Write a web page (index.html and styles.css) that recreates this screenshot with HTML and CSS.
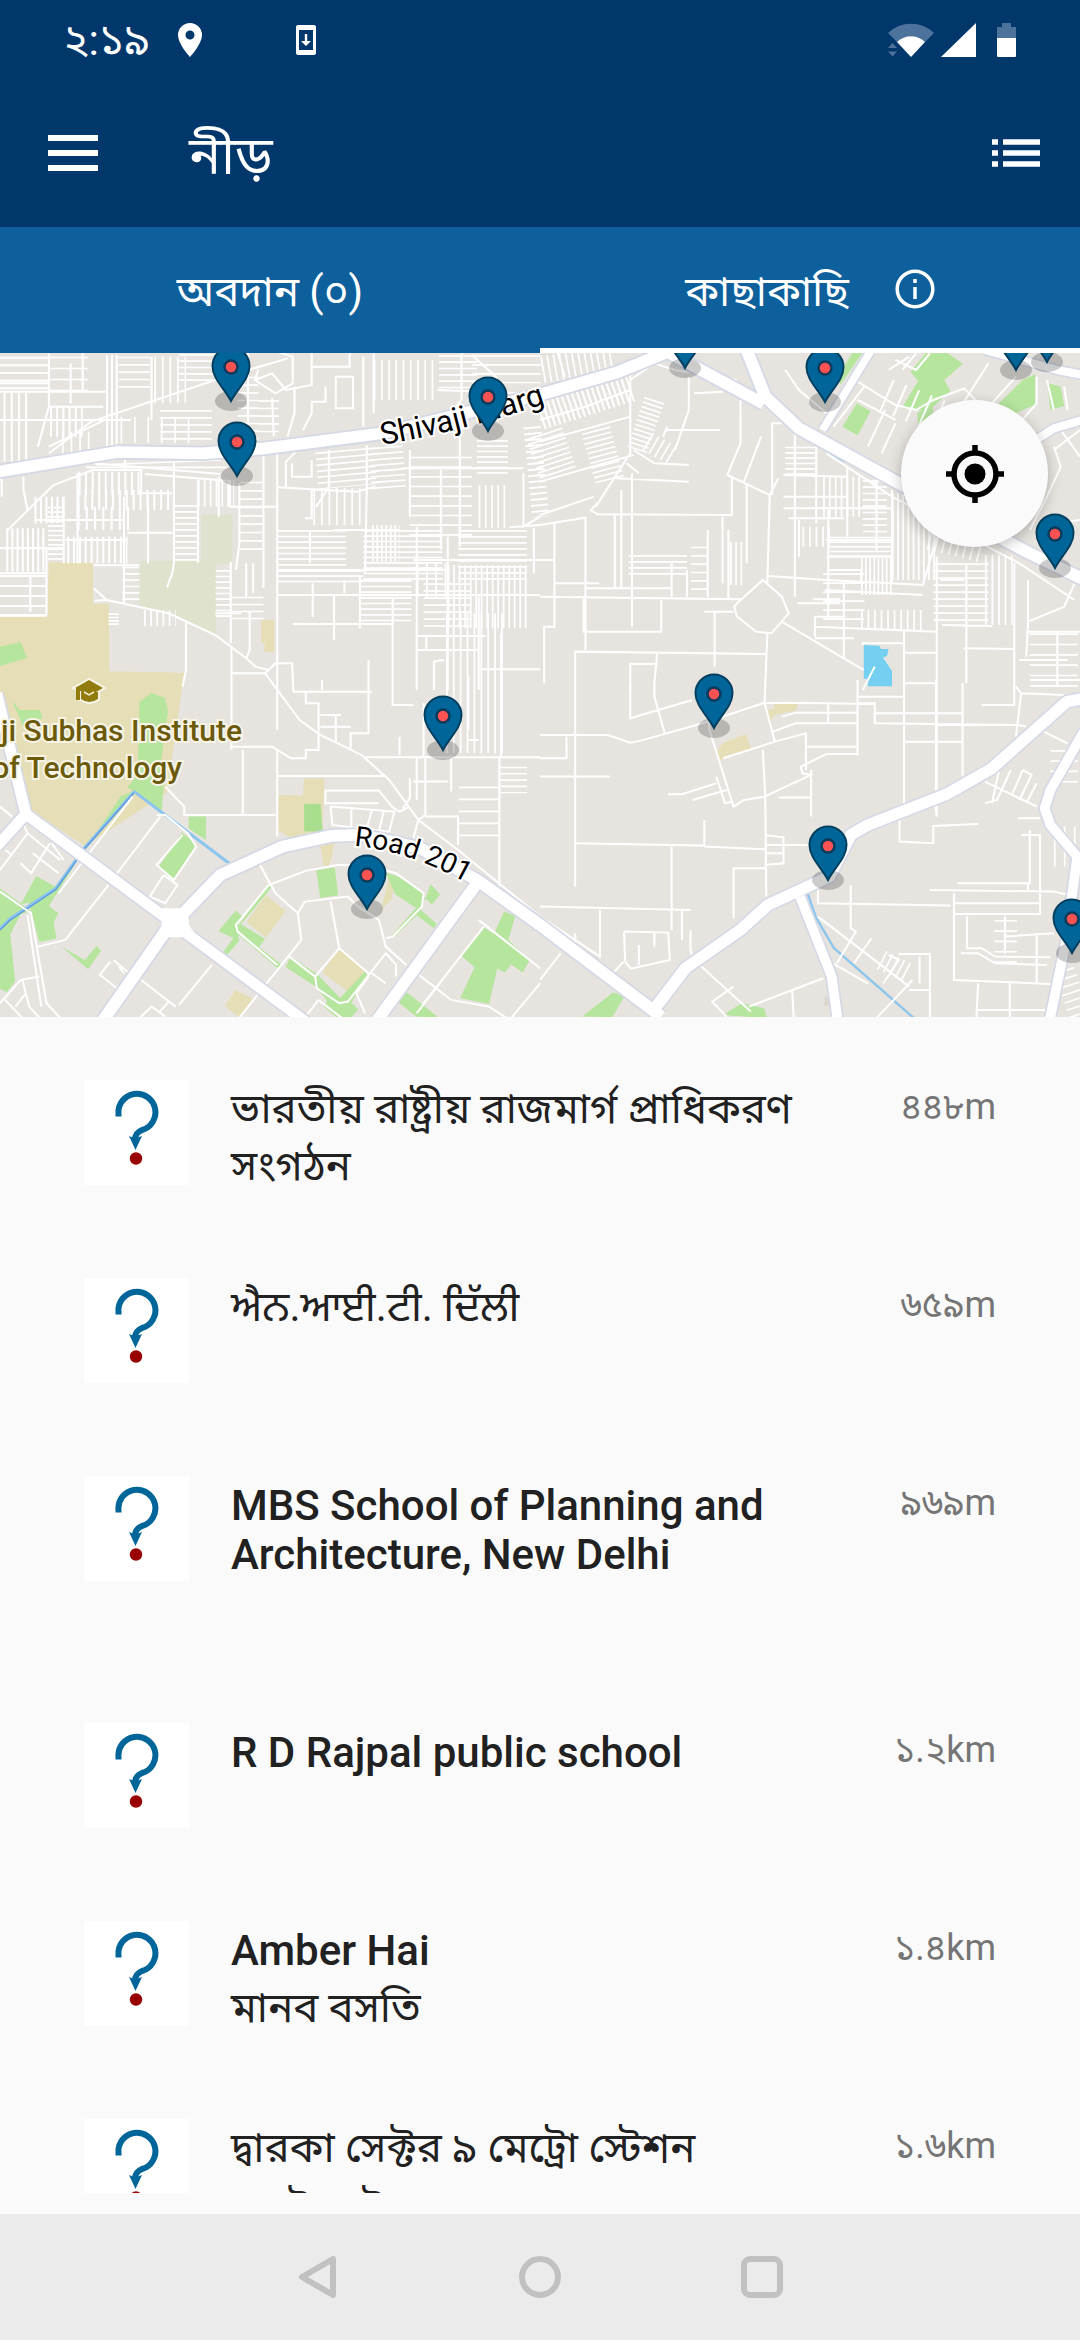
FILE: index.html
```html
<!DOCTYPE html>
<html lang="bn">
<head>
<meta charset="utf-8">
<meta name="viewport" content="width=device-width, initial-scale=1">
<title>নীড়</title>
<link rel="stylesheet" href="styles.css">
</head>
<body>
<svg class="defs" aria-hidden="true">
  <defs>
    <symbol id="question" viewBox="0 0 105 105">
      <path d="M34.500 36.500V34A18.500 18.500 0 1 1 58 50C53 52 51 55 51 60" fill="none" stroke="#069" stroke-width="6"/>
      <path d="M45 56q6 3 13 0l-6.500 14z" fill="#069"/>
      <circle cx="52" cy="78.500" r="6.200" fill="#900"/>
    </symbol>
    <g id="pin">
      <ellipse cx="0" cy="-1" rx="16" ry="10" fill="#000" fill-opacity=".2"/>
      <path d="M0-1C-6-13-18.500-23-18.500-36A18.500 18.500 0 0 1 18.500-36C18.500-23 6-13 0-1z" fill="#069" stroke="#003f5f" stroke-width="2"/>
      <circle cy="-35" r="6.500" fill="#ff5252" stroke="#0a3a5c" stroke-width="2.500"/>
    </g>
  </defs>
</svg>

<div class="screen">
  <header class="top">
    <div class="status">
      <span class="clock">২:১৯</span>
      <svg class="place" viewBox="0 0 24 34"><path d="M12 0A12 12 0 0 0 0 12c0 9 12 22 12 22s12-13 12-22A12 12 0 0 0 12 0zm0 16.500a4.500 4.500 0 1 1 0-9 4.500 4.500 0 0 1 0 9z" fill="#fff"/></svg>
      <svg class="update" viewBox="0 0 20 30"><path d="M2 0h16a2 2 0 0 1 2 2v26a2 2 0 0 1-2 2H2a2 2 0 0 1-2-2V2a2 2 0 0 1 2-2zm1 5v20h14V5z" fill="#fff" fill-rule="evenodd"/><path d="M8.800 9h2.400v7H15l-5 5-5-5h3.800z" fill="#fff"/></svg>
      <span class="spacer"></span>
      <svg class="signals" viewBox="0 0 130 36">
        <path d="M1 11a33 33 0 0 1 46 0L38 20a20 20 0 0 0-28 0z" fill="#4d739c"/>
        <path d="M10 20a20 20 0 0 1 28 0L24 35z" fill="#fff"/>
        <path d="M1 26h9l-4.500-5zM1 29.500h9l-4.500 5z" fill="#4d739c"/>
        <path d="M89 1v34H54z" fill="#fff"/>
        <path d="M110 16V5h5V1h9v4h5v11z" fill="#4d739c"/>
        <path d="M110 16h19v18a1 1 0 0 1-1 1h-17a1 1 0 0 1-1-1z" fill="#fff"/>
      </svg>
    </div>
    <div class="toolbar">
      <button class="icon-button" aria-label="মেনু"><svg class="menu-icon" viewBox="0 0 50 36"><path d="M0 3h50M0 18h50M0 33h50" stroke="#fff" stroke-width="6"/></svg></button>
      <h1>নীড়</h1>
      <span class="spacer"></span>
      <button class="icon-button" aria-label="তালিকা"><svg class="list-icon" viewBox="0 0 48 28"><path d="M0 3h6M0 14h6M0 25h6M11 3h37M11 14h37M11 25h37" stroke="#fff" stroke-width="5.500"/></svg></button>
    </div>
  </header>

  <nav class="tabs">
    <button class="tab"><span class="tab-label">অবদান (০)</span></button>
    <button class="tab active"><span class="tab-label">কাছাকাছি</span>
      <svg class="info-icon" viewBox="0 0 40 40"><circle cx="20" cy="20" r="17.800" fill="none" stroke="#fff" stroke-width="3.500"/><path d="M20 10v4M20 18v12" stroke="#fff" stroke-width="3.500"/></svg>
    </button>
  </nav>

  <main>
    <section class="map">
      <svg class="map-art" viewBox="0 0 1080 664" preserveAspectRatio="xMidYMid slice">
        <rect width="1080" height="664" fill="#e7e4df"/>
        <g transform="translate(0 -3) scale(.3444 .3333)" fill="none">
          <g fill="#dfe2cd">
            <path d="M585 494h92l-3 148-47 2v210l-90-46-134-40 3-136h179z"/>
            <path d="M2395 1940h40v24l-42 4z" fill="#dcd8cf"/>
          </g>
          <g fill="#e5deb6">
            <path d="M142 637h128v124h47v203l218 4-50 360-238 160-170-115-77-300V800h137z"/>
            <path d="M758 810h38v96h-28v-28h-10zM808 1335l72 2 2-52h60l-6 160-96 18-32-22zM928 1480h42l-6 40-10 28h-14zM772 1635l58 48-58 80-56-46zM984 1792l78 66-48 70-78-60zM684 1920l50 26-40 56-42-34zM1130 1580l14 30-8 40-30 30z"/>
            <path d="M2230 1080l18-4 2-16 64-8v28l-64 14-16 20zM2084 1200l14-20 68-28 16 44-98 36z"/>
          </g>
          <g fill="#b6e59e">
            <path d="M0 890l60-14 18 48-78 24zM38 1060h6l10 20h62l8 24-58 22zM405 1055l35-26 38 14 10 40-20 150-10 130-88-50 30-40z"/>
            <path d="M350 1340l40-18 90-90-10 150-80-56-140 170zM548 1400h50v70l-50-34zM528 1448l44 36-68 102-44-34z"/>
            <path d="M105 1578l55 32 60-70-78 128 28 22-14 26 8 50-50 10-30-118-24 6zM0 1615l90 68-30 10-30 60 14 140-24 34-20-10zM178 1790l68 40 34-42 14 14-38 56z"/>
            <path d="M780 1605l8 8-88 110 70 44-18 24 64 52-10 12-126-112zM684 1682l20 18-14 30 4 44-34 40-12-8 30-42-44-20zM918 1562l54-10 10 84-52 8z"/>
            <path d="M844 1820l78 54 66 70 72-80 6 14-46 80 20 20-38 46-62-54 10-16-30-42-90-60zM1120 1568l40 14 70 48 4 20 16-48 28 32-24 30-20-20-14 34 48 44-8 14-50-40-60 60-20 10 78-92-60-40z"/>
            <path d="M1464 1684l32 14-20 72 62 60-20 38-34-24-18 24-22-12-24 106-84-18 42-92-38-34 64-86 30 20zM1170 1918l112 92h-60l-70-56z"/>
            <path d="M1690 2000l90-72 34 10-36 64zM2100 1995l54-36 64 16 10 30z"/>
            <path d="M2480 0h30l-70 104-8-24zM2488 160l40 24-38 72-44-26zM2688 9h62l46 32-54 50 18 32-64 60-78-8 48-82-22-28zM2664 190l44-30 2 50-44 20zM2970 90l36-18v92l-90 40-30-30zM3040 98l40 12 10 58-40 12z"/>
            <path d="M883 1362h48l6 84-54-2z" fill="#a9de8f"/>
          </g>
          <path d="M2508 885l45 2 5 10h22l-4 20-12 6 26 40v46h-70v-20l-12-4z" fill="#75cff0"/>
          <g stroke="#8cc5ee" stroke-width="9" stroke-linejoin="round">
            <path d="M0 1736L30 1706 162 1615 245 1494 390 1325 665 1540"/>
            <path d="M2345 1630l24 72 52 92 232 210" stroke-width="7"/>
            <path d="M2290 235l160 100" stroke-width="4"/>
            <path d="M0 1740L30 1710 162 1619 245 1498 388 1329" stroke="#5e9be0" stroke-width="4"/>
          </g>

          <!-- blocks of parallel lanes, drawn as dashed bands -->
          <g stroke="#fff">
            <path d="M10 230H90" stroke-width="210" stroke-dasharray="6 15"/>
            <path d="M70 20V130" stroke-width="140" stroke-dasharray="6 17"/>
            <path d="M200 20V140" stroke-width="110" stroke-dasharray="5 28"/>
            <path d="M308 160H345" stroke-width="290" stroke-dasharray="6 8"/>
            <path d="M145 215H240" stroke-width="90" stroke-dasharray="6 12"/>
            <path d="M180 280H270" stroke-width="70" stroke-dasharray="5 20"/>
            <path d="M390 20V130" stroke-width="90" stroke-dasharray="5 17"/>
            <path d="M448 90H540" stroke-width="140" stroke-dasharray="5 17"/>
            <path d="M570 12V100" stroke-width="100" stroke-dasharray="5 14"/>
            <path d="M350 240H560" stroke-width="80" stroke-dasharray="5 34"/>
            <path d="M540 180V270" stroke-width="150" stroke-dasharray="5 16"/>
            <path d="M720 80V280M780 150V260" stroke-width="60" stroke-dasharray="5 18"/>
            <path d="M1085 90H1260" stroke-width="120" stroke-dasharray="5 16"/>
            <path d="M1330 15V120" stroke-width="110" stroke-dasharray="5 14"/>
            <path d="M1470 15V100" stroke-width="200" stroke-dasharray="5 22"/>
            <path d="M270 340L640 372M420 372L660 392" stroke-width="6"/>
            <path d="M250 352L660 352M280 345L640 330" stroke-width="5"/>
            <path d="M228 400H410" stroke-width="70" stroke-dasharray="6 13"/>
            <path d="M225 450H500" stroke-width="60" stroke-dasharray="6 14"/>
            <path d="M195 600H370" stroke-width="80" stroke-dasharray="6 11"/>
            <path d="M18 600H135" stroke-width="130" stroke-dasharray="6 9"/>
            <path d="M100 480H190" stroke-width="80" stroke-dasharray="6 10"/>
            <path d="M225 505H380" stroke-width="70" stroke-dasharray="6 18"/>
            <path d="M162 470V630" stroke-width="45" stroke-dasharray="5 9"/>
            <path d="M540 465V640" stroke-width="70" stroke-dasharray="5 13"/>
            <path d="M575 430H680" stroke-width="80" stroke-dasharray="5 12"/>
            <path d="M732 395V600" stroke-width="70" stroke-dasharray="5 20"/>
            <path d="M0 675V800" stroke-width="270" stroke-dasharray="6 24"/>
            <path d="M380 650V760" stroke-width="50" stroke-dasharray="5 14"/>
            <path d="M650 660V810" stroke-width="48" stroke-dasharray="5 12"/>
            <path d="M330 790V830" stroke-width="30" stroke-dasharray="5 5"/>
            <path d="M418 805H510" stroke-width="48" stroke-dasharray="5 13"/>
            <path d="M720 740V810" stroke-width="90" stroke-dasharray="5 16"/>
            <path d="M905 540V660" stroke-width="200" stroke-dasharray="5 12"/>
            <path d="M1170 540V690" stroke-width="230" stroke-dasharray="5 11"/>
            <path d="M930 660V700" stroke-width="250" stroke-dasharray="5 11"/>
            <path d="M1120 690V820" stroke-width="150" stroke-dasharray="5 12"/>
            <path d="M1430 540V700" stroke-width="200" stroke-dasharray="5 13"/>
            <path d="M1080 580H1160" stroke-width="110" stroke-dasharray="5 8"/>
            <path d="M1300 740H1540" stroke-width="190" stroke-dasharray="5 11"/>
            <path d="M1210 690H1300" stroke-width="100" stroke-dasharray="5 22"/>
            <path d="M1300 700V830" stroke-width="140" stroke-dasharray="5 16"/>
            <path d="M1000 300L1010 410" stroke-width="170" stroke-dasharray="5 13"/>
            <path d="M1120 290L1130 420" stroke-width="100" stroke-dasharray="5 12"/>
            <path d="M910 470H1050" stroke-width="110" stroke-dasharray="5 17"/>
            <path d="M1280 320V560" stroke-width="180" stroke-dasharray="5 24"/>
            <path d="M1430 270V380" stroke-width="90" stroke-dasharray="5 11"/>
            <path d="M1390 470H1480" stroke-width="130" stroke-dasharray="5 13"/>
            <path d="M1545 230L1570 500" stroke-width="50" stroke-dasharray="6 12"/>
            <path d="M1295 1000H1460" stroke-width="420" stroke-dasharray="5 15"/>
            <path d="M1392 1310V1480" stroke-width="118" stroke-dasharray="5 31"/>
            <path d="M1490 1250V1330" stroke-width="80" stroke-dasharray="5 14"/>
            <path d="M1575 60L1780 25" stroke-width="80" stroke-dasharray="5 13"/>
            <path d="M1568 195L1830 110" stroke-width="90" stroke-dasharray="6 9"/>
            <path d="M1580 250L1620 370" stroke-width="110" stroke-dasharray="5 10"/>
            <path d="M1730 240L1770 390" stroke-width="85" stroke-dasharray="5 10"/>
            <path d="M1900 150L1850 300" stroke-width="60" stroke-dasharray="5 9"/>
            <path d="M1880 275L1960 320" stroke-width="60" stroke-dasharray="5 14"/>
            <path d="M1910 615V680" stroke-width="170" stroke-dasharray="5 13"/>
            <path d="M2030 590V720" stroke-width="48" stroke-dasharray="5 20"/>
            <path d="M2120 640H2160" stroke-width="130" stroke-dasharray="5 10"/>
            <path d="M2325 290V380" stroke-width="90" stroke-dasharray="5 11"/>
            <path d="M2330 560H2410" stroke-width="60" stroke-dasharray="5 14"/>
            <path d="M2390 440H2500" stroke-width="120" stroke-dasharray="5 12"/>
            <path d="M2500 560V620" stroke-width="180" stroke-dasharray="5 9"/>
            <path d="M2540 390V550" stroke-width="70" stroke-dasharray="5 14"/>
            <path d="M2590 560H2720" stroke-width="260" stroke-dasharray="5 10"/>
            <path d="M2500 680H2590" stroke-width="110" stroke-dasharray="5 7"/>
            <path d="M2500 810H2690" stroke-width="60" stroke-dasharray="5 14"/>
            <path d="M2450 670V830" stroke-width="120" stroke-dasharray="5 22"/>
            <path d="M2790 640V820" stroke-width="160" stroke-dasharray="5 16"/>
            <path d="M2860 720H2940" stroke-width="210" stroke-dasharray="5 14"/>
            <path d="M2700 560L2860 600" stroke-width="80" stroke-dasharray="5 16"/>
            <path d="M3060 850V1010" stroke-width="140" stroke-dasharray="5 26"/>
            <path d="M3090 1200V1320" stroke-width="80" stroke-dasharray="5 26"/>
            <path d="M2560 1830L2640 1870" stroke-width="60" stroke-dasharray="5 14"/>
            <path d="M2920 1710V1840" stroke-width="66" stroke-dasharray="5 26"/>
            <path d="M3060 1490H3136" stroke-width="120" stroke-dasharray="5 24"/>
            <path d="M3090 1860L3136 2000" stroke-width="60" stroke-dasharray="5 18"/>
            <path d="M2800 230L2560 130" stroke-width="100" stroke-dasharray="6 34"/>
          </g>

          <!-- lanes -->
          <g stroke="#fff" stroke-width="6">
            <path d="M142 10V170L110 290M205 40V160M240 10V120M142 310L265 215 625 90 835 25M142 290L300 212M440 20V210M0 100H140M0 125H310M142 170H300M0 210H380M720 10V310M750 60L740 90 800 130 850 100V20L790 0M740 90L790 70 830 120 905 105V10M855 110V190L835 260M905 50H1015V10M975 80H1025V175H975zM945 110V155H905V190L880 240M790 145L795 260M1055 20V230M1085 10V190M1340 10V150L1300 200M1370 15L1440 80V130M1270 120L1520 130"/>
            <path d="M68 380V420L80 480M0 390H5V440M18 545L155 405 270 360H410V430H500M363 330V362M505 335V640L500 670 485 712M575 388V638M635 380V500M668 390V470H808M765 310V715M805 310V1140M225 370V640M185 440V640M360 440V762M105 510H360M0 595H185M135 595V670M0 670H135V795M370 548H500M190 570H370M430 440V640M695 400V580L685 660M0 795H137M88 675V785M272 715L310 750 490 790 628 857 715 925 742 950 780 960M275 752L310 750M725 785V900L715 925M540 818V960L530 1010M272 646H405M670 635V880M672 890V1200M715 640V740M735 640V730M625 790H700"/>
            <path d="M860 305L830 335V410M848 340V380H905V330M955 300V410L918 470M805 412L1035 425 1090 410M905 415V505H885M1065 285V410L1060 670M1190 300V500M1210 530V1020M1335 200V590M1165 355H1520M1280 360V600M970 540H1160M900 540V640M1045 680V835M1000 690V730M805 735H1568M850 822H1140M970 738V870M908 700V800M1140 740V1020M805 660H1300M1200 630H1568M1300 560V1020M1520 370V530L1568 500M1480 532L1568 525M1550 535V670M1210 858H1410M1210 900H1390M1238 860V900M1390 740V1020M1260 1020V935L1290 930M1455 850V1220M1395 958H1568"/>
            <path d="M672 970H770L800 940H848L852 1025H1080M770 970L870 1110 930 1155 1050 1215 1130 1290 1215 1410 1330 1500 1568 1700M935 990V1020M1070 930V1150H1018V1195M888 1025V1060H925V1200H888V1225H845L790 1190H668M705 1200V1395M930 1095H990M975 1095V1180M930 1130H1018M945 1322H1100L1140 1372 1160 1385 1190 1370M945 1322V1360H1100M960 1370L965 1425 1130 1445 1145 1385 960 1370M1020 1375V1430M1080 1380L1065 1435M1115 1382L1100 1445M805 1278H1115M805 1200V1460M1160 1160V1215M1060 1222H1568M1210 1225V1350M1235 1220V1395L1215 1410 1200 1465M1235 1400H1330V1485M1190 1285V1345L1170 1375M1200 1295H1300M1310 1225V1325M1450 1220V1610M1140 1020V1065H1200M1230 1060V1220M1360 980V1140M1360 1170H1390M480 1310L535 1370V1395H800M455 1395H480L545 1450 570 1490M385 1340L170 1630M465 1400L340 1570M315 1605L190 1770 110 1790M530 1455L455 1545 505 1590 570 1490M475 1575L515 1605 480 1660 435 1640 475 1575"/>
            <path d="M0 1625L90 1690 135 1960 180 2010M80 1695L120 1970M65 1415L80 1450 0 1560M80 1450L175 1530M145 1480L90 1570 60 1540M95 1510L170 1570M185 1530L150 1480M0 1370L35 1400M15 1500L35 1515M0 1960L60 1890 115 1880M65 1890L85 1970 120 2010M75 1930L45 1970M15 1950L70 2010M320 1835L290 1875 340 1915 375 1870 330 1830M345 1850L360 1870M410 1890L510 1970M615 1845L520 1965M400 2010L440 1970 480 2000M490 1955L460 1990"/>
            <path d="M755 1545L800 1630 865 1690M780 1605L890 1562 980 1545H1060L1150 1570 1230 1630 1225 1670 1140 1760 1120 1765M780 1605L685 1725 690 1745 805 1845M865 1690L885 1655 1010 1640 1040 1670 1100 1710 1120 1790 1180 1845M865 1690L875 1770 690 2010M960 1655L985 1795 1070 1870M985 1795L915 1880 920 1915 985 1960 1010 1955 1120 1810 1150 1845V1880M840 1820L915 1880M1080 1870L1120 1900M1210 1870L1310 1950 1420 1970 1480 2010M1390 1710L1568 1855M1405 1730L1230 1960M925 1950L880 2010M1070 1880L1035 1930 1060 1990M925 1950L1000 2010M1568 1900L1480 2010M1325 1835L1210 1990"/>
            <path d="M1620 10L1640 80M1830 60V310L1730 470M1830 90L1940 10M1568 210L1700 170 1830 120M1568 275L1830 200M1568 395L1840 315M1900 40L1960 60 2140 90M2000 80V180L1960 300M1820 340L1855 370M1840 300L1900 340 2000 345M1790 385L2000 395M2150 150V280L2112 375 2235 435 2260 385M2210 260L2160 395M2235 435L2228 700M2168 400V640M2125 380V495L1735 493 1715 480 1735 460M1568 495L1725 440M1568 525L1700 503V900M1785 490V715M1804 420V715M1835 370V830M2098 500V700M2055 540V740M2115 540V750M1568 740L2150 748 2132 770 2140 800 2195 845 2240 850 2290 790 2270 740 2215 690 2140 760M1610 520V830H1580V1000M1920 750V845H1695V745M1568 630H1608M1950 640V740M1995 660V740M1610 700H1740M1695 715H1950M1670 1020V905L2225 912M1670 905V1610M2228 850L2220 1060M2075 785V950M2045 785H2130M1830 1020V942H1910M1908 912L1900 1000M2015 130L2100 125M1930 240H2090M1938 230L1925 260M2270 815L2450 925 2508 960M2230 678L2400 690M2240 220H2270M2242 220V435"/>
            <path d="M2275 375L2460 380M2308 250V740M2370 290V520M2275 440H2460M2275 475H2588M2290 505H2450M2405 480V800M2460 350V560M2320 510V620M2400 570H2590M2400 620H2588V700L2400 690M2404 660H2500V700M2395 720L2680 735M2315 760H2440M2360 748H2440M2450 690V925M2366 800H2450M2366 830L2720 845M2366 865H2480M2366 800V860M2505 885V880H2628M2505 1020L2540 950M2590 420V700L2680 705 2720 560M2625 840V1060M2720 620V1400L2710 1330M2806 640V1000M2800 690H2730M2500 380L2540 400M2735 825L2880 828M2798 895L2945 897M2945 640V1020M2985 690V820L2980 920M2985 815L3090 770 3120 700M2980 845H3136M3070 845V1010M2960 930H3100M2400 310L2590 440 2960 640 3120 750M2545 380V600M2628 908H2720M2628 1000H2720"/>
            <path d="M2280 60L2320 120 2400 190M2490 95L2600 165 2660 180 2710 150 2800 115 2850 170M2510 110L2420 230M2490 150L2600 210M2570 180L2520 290M2700 10L2660 60 2600 30M2660 10L2620 60M2640 20L2580 60M2870 40L2790 170M2950 80L2880 160M3010 80V160L2960 220M3040 90L3060 180M3090 110L3100 180M3136 240L3060 300M3060 290L3080 350 3040 440 2990 540M3080 240L3136 320M3136 510L3060 520M2600 220L2560 310"/>
            <path d="M1568 1155H1765L1830 1178 1860 1172 2040 1120 2215 1060 2300 1058 2540 1062M1830 1000V1105L2010 1050M1900 1000V1040L1930 1150M1645 1160V1225H1568M1568 1280H1770M2220 1060L2250 1175 2100 1225M2060 1140L2130 1370 2160 1350 2220 1340 2355 1275 2330 1270 2325 1250 2400 1212H2490V990M2050 1010L2060 1140M2245 1145L2310 1120H2490M2270 1100L2310 1088H2490M2250 1175L2340 1150V1260M2340 1190H2490M2355 1260V1400M2262 1343H2355M2405 1060V1120M1940 1333H1980L2080 1300M2010 1350L2110 1320M2080 1280L2105 1360 2125 1355M2215 1200L2222 1340 2225 1640M2220 1455L2275 1462V1540L2220 1545M2220 1485H2345M2225 1510H2275M1670 1480L2045 1487V1410M2045 1490L2225 1498M1950 1490V1740M2225 1555H2130V1705M1568 1670L2005 1680M1742 1680V1820L1568 1700M1670 1750V1790M1980 1680V1770M2005 1740V1800L2010 1820M1812 1745L1940 1748 1945 1830 1832 1856 1815 1835 1812 1745M1855 1785V1845M1900 1750V1790M1810 1835L1780 1870M1628 1810L1568 1890"/>
            <path d="M2490 1040H2625V1360M2490 1060H2540V1120L2960 1125 2980 1130M2540 1090H2795M2625 1175H2795M2718 990V1330M2795 1000V1280M2950 1010L2965 1030 2950 1160M2850 1065H2945V1010M2965 1030L3090 1035M3030 1145L3100 1180M2612 1410V1475L2710 1480V1428L2840 1422M2375 1620V1660L2760 1667M2470 1605V1735L2485 1745 2430 1840M2375 1700L2640 1910M2400 1830L2520 1900M2530 1765L2480 1840M2650 1890L2540 2010M2860 1295L3010 1370M2900 1265L2880 1360M2935 1260L2895 1350 2860 1360M2970 1260L2940 1330M2970 1260L2995 1275 2960 1350M3010 1300L2980 1360M2955 1405H3020M2990 1440V1600H2780M2965 1455H3020V1695M2700 1620L3060 1625 3100 1635M2770 1630V1890L3050 1902M2770 1660H3020M2770 1692H3020M2808 1700V1795H2850L2890 1820 3050 1822M2790 1810H2840L2890 1840 3040 1845M2918 1700V1810M2918 1760L3060 1750M3010 1750V1900M2840 1900L2835 2010M2932 1900V2010M2835 1980H3050M2565 1900L2610 1830 2580 1815M2700 1810V2010M2610 1812H2700M2640 1920H2700M2670 1820V1900M2005 1820L2180 1985M2130 1910L2068 1955 2110 2000M2175 1970L2390 1885M2300 1920L2305 2010M2990 990H3136M2985 1600V1620"/>
          </g>

          <!-- main roads: casing, then surface -->
          <g stroke-linejoin="round">
            <g stroke="#d5d9e6">
              <path d="M-10 366L340 306 590 310 770 295 1110 250 1568 134 1790 68 1938 6 2218 162M2168 0L2222 140 2320 235 2660 428 2980 605 3150 690" stroke-width="46"/>
              <path d="M2388 240L2530 0" stroke-width="32"/>
              <path d="M2860 0L3070 60 3150 76M3000 275L3060 235 3150 208" stroke-width="34"/>
              <path d="M-10 1030L30 1200 75 1392 -10 1490M75 1392L500 1718 900 2025" stroke-width="42"/>
              <path d="M505 1720L640 1575 820 1490 960 1458 1050 1455 1220 1495 1385 1590 1568 1725 1920 2000M500 1715L290 2025" stroke-width="46"/>
              <path d="M1385 1600L1085 2025M1890 1990L1990 1855 2150 1740 2230 1665 2408 1580 2470 1455 2520 1425 2748 1333 2878 1257 3098 1055 3150 1045" stroke-width="44"/>
              <path d="M2323 1640L2415 1880 2434 2025M3150 1140L3050 1320 3033 1375 3050 1425 3128 1520 3112 1640 3094 1780 3045 2025" stroke-width="38"/>
            </g>
            <g stroke="#fff">
              <path d="M-10 366L340 306 590 310 770 295 1110 250 1568 134 1790 68 1938 6 2218 162M2168 0L2222 140 2320 235 2660 428 2980 605 3150 690" stroke-width="35"/>
              <path d="M2388 240L2530 0" stroke-width="22"/>
              <path d="M2860 0L3070 60 3150 76M3000 275L3060 235 3150 208" stroke-width="24"/>
              <path d="M-10 1030L30 1200 75 1392 -10 1490M75 1392L500 1718 900 2025" stroke-width="32"/>
              <path d="M505 1720L640 1575 820 1490 960 1458 1050 1455 1220 1495 1385 1590 1568 1725 1920 2000M500 1715L290 2025" stroke-width="35"/>
              <path d="M1385 1600L1085 2025M1890 1990L1990 1855 2150 1740 2230 1665 2408 1580 2470 1455 2520 1425 2748 1333 2878 1257 3098 1055 3150 1045" stroke-width="34"/>
              <path d="M2323 1640L2415 1880 2434 2025M3150 1140L3050 1320 3033 1375 3050 1425 3128 1520 3112 1640 3094 1780 3045 2025" stroke-width="28"/>
            </g>
            <path d="M470 1675h75l4 50 30 45-40-8h-50l-40 8 20-45z" fill="#fff"/>
          </g>
        </g>

        <g class="campus">
          <path d="M75 335l14-8 14 8-14 8zM80 340v8M98 339v7q-9 6-17 0v-7" fill="#917c0b" stroke="#fff" stroke-opacity=".7" stroke-width="4" paint-order="stroke"/>
          <path d="M76 335v12h4v-10z" fill="#917c0b"/>
          <path d="M84 339l5 3 5-3" fill="none" stroke="#f4efd8" stroke-width="1.500"/>
          <text x="242" y="388" text-anchor="end">ji Subhas Institute</text>
          <text x="182" y="425" text-anchor="end">of Technology</text>
        </g>
        <path id="shivaji" d="M382 92Q470 77 565 44" fill="none"/>
        <path id="road" d="M354 493Q415 498 480 538" fill="none"/>
        <g class="road-name">
          <text><textPath href="#shivaji">Shivaji Marg</textPath></text>
          <text class="small"><textPath href="#road">Road 201</textPath></text>
        </g>

        <use href="#pin" x="231" y="49"/>
        <use href="#pin" x="237" y="124"/>
        <use href="#pin" x="488" y="79"/>
        <use href="#pin" x="685" y="16"/>
        <use href="#pin" x="825" y="50"/>
        <use href="#pin" x="1016" y="18"/>
        <use href="#pin" x="1047" y="10"/>
        <use href="#pin" x="1055" y="216"/>
        <use href="#pin" x="443" y="398"/>
        <use href="#pin" x="367" y="557"/>
        <use href="#pin" x="714" y="376"/>
        <use href="#pin" x="828" y="528"/>
        <use href="#pin" x="1072" y="601"/>
      </svg>
      <button class="locate" aria-label="আমার অবস্থান">
        <svg viewBox="0 0 58 58"><circle cx="29" cy="29" r="21" fill="none" stroke="#000" stroke-width="5.500"/><circle cx="29" cy="29" r="10.500"/><path d="M29 0v8M29 50v8M0 29h8M50 29h8" stroke="#000" stroke-width="5.500"/></svg>
      </button>
    </section>

    <ul class="places">
      <li class="place-row">
        <svg class="thumb"><use href="#question"/></svg>
        <div class="info indic"><h2>ভারতীয় রাষ্ট্রীয় রাজমার্গ প্রাধিকরণ সংগঠন</h2></div>
        <span class="distance">৪৪৮m</span>
      </li>
      <li class="place-row">
        <svg class="thumb"><use href="#question"/></svg>
        <div class="info indic"><h2 lang="pa">ਐਨ.ਆਈ.ਟੀ. ਦਿੱਲੀ</h2></div>
        <span class="distance">৬৫৯m</span>
      </li>
      <li class="place-row">
        <svg class="thumb"><use href="#question"/></svg>
        <div class="info"><h2 lang="en">MBS School of Planning and Architecture, New Delhi</h2><p></p></div>
        <span class="distance">৯৬৯m</span>
      </li>
      <li class="place-row">
        <svg class="thumb"><use href="#question"/></svg>
        <div class="info"><h2 lang="en">R D Rajpal public school</h2><p></p></div>
        <span class="distance">১.২km</span>
      </li>
      <li class="place-row">
        <svg class="thumb"><use href="#question"/></svg>
        <div class="info"><h2 lang="en">Amber Hai</h2><p>মানব বসতি</p></div>
        <span class="distance">১.৪km</span>
      </li>
      <li class="place-row">
        <svg class="thumb"><use href="#question"/></svg>
        <div class="info indic"><h2>দ্বারকা সেক্টর ৯ মেট্রো স্টেশন</h2><p>মেট্রো স্টেশন</p></div>
        <span class="distance">১.৬km</span>
      </li>
    </ul>
  </main>

  <footer class="system-nav">
    <button aria-label="পিছনে"><svg viewBox="0 0 42 42"><path d="M36 3L5 21l31 18z" fill="none" stroke="#c1c1c1" stroke-width="6" stroke-linejoin="round"/></svg></button>
    <button aria-label="হোম"><svg viewBox="0 0 42 42"><circle cx="21" cy="21" r="18" fill="none" stroke="#c1c1c1" stroke-width="6"/></svg></button>
    <button aria-label="সাম্প্রতিক"><svg viewBox="0 0 42 42"><rect x="3" y="3" width="36" height="36" rx="6" fill="none" stroke="#c1c1c1" stroke-width="6"/></svg></button>
  </footer>
</div>
</body>
</html>
```
FILE: styles.css
```css
* {
  box-sizing: border-box;
}

body {
  margin: 0;
  background: #fafafa;
  color: #212121;
  font-family: Roboto, "Noto Sans Bengali", "Noto Sans Gurmukhi", "Noto Sans", sans-serif;
}

button {
  margin: 0;
  padding: 0;
  border: 0;
  background: none;
  color: inherit;
  font: inherit;
}

svg {
  display: block;
  flex: none;
}

.defs {
  position: absolute;
  width: 0;
  height: 0;
}

.screen {
  display: flex;
  flex-direction: column;
  height: 100vh;
}

.spacer {
  flex: 1;
}

.top {
  flex: none;
  background: #01376b;
  color: #fff;
}

.status {
  display: flex;
  align-items: center;
  height: 80px;
  padding: 0 63px;
}

.clock {
  width: 115px;
  font-size: 43px;
  line-height: 48px;
}

.place {
  width: 24px;
  height: 34px;
}

.update {
  width: 20px;
  height: 30px;
  margin-left: 94px;
}

.signals {
  width: 130px;
  height: 36px;
}

.toolbar {
  display: flex;
  align-items: center;
  height: 147px;
  padding: 0 40px 2px 48px;
}

.icon-button {
  display: flex;
  align-items: center;
  height: 96px;
}

.menu-icon {
  width: 50px;
  height: 36px;
}

.list-icon {
  width: 48px;
  height: 28px;
}

h1 {
  margin: 0 0 0 91px;
  padding-top: 6px;
  font-size: 53px;
  font-weight: 400;
  line-height: 72px;
}

.tabs {
  display: flex;
  flex: none;
  height: 126px;
  background: #0d609c;
  color: #fff;
  font-size: 42px;
}

.tab {
  display: flex;
  flex: 1;
  align-items: center;
  justify-content: center;
  gap: 46px;
  padding-top: 2px;
  border-bottom: 5px solid transparent;
}

.tab-label {
  padding-top: 12px;
}

.tab.active {
  border-bottom-color: #fff;
}

.info-icon {
  width: 40px;
  height: 40px;
}

main {
  display: flex;
  flex: 1;
  flex-direction: column;
  min-height: 0;
  padding-bottom: 21px;
}

.map {
  position: relative;
  flex: none;
  overflow: hidden;
}

.map-art {
  width: 100%;
  height: auto;
}

.campus text {
  fill: #6b5a0a;
  font-size: 30px;
  font-weight: 500;
  paint-order: stroke;
  stroke: #f7f4e6;
  stroke-width: 4px;
}

.road-name text {
  fill: #000;
  font-size: 31px;
  paint-order: stroke;
  stroke: #fff;
  stroke-width: 4px;
}

.road-name .small {
  font-size: 28px;
}

.locate {
  position: absolute;
  top: 47px;
  right: 32px;
  display: grid;
  place-items: center;
  width: 147px;
  height: 147px;
  border-radius: 50%;
  background: #fafafa;
  box-shadow: 0 4px 14px rgba(0, 0, 0, .25);
}

.locate svg {
  width: 58px;
  height: 58px;
}

.places {
  flex: 1;
  min-height: 0;
  margin: 0;
  padding: 21px 84px 0;
  overflow: hidden;
  list-style: none;
}

.place-row {
  display: flex;
  align-items: flex-start;
  padding: 42px 0;
}

.thumb {
  width: 105px;
  height: 105px;
  background: #fff;
}

.info {
  flex: 1;
  min-width: 0;
  min-height: 114px;
  padding: 5px 42px 0;
}

.info.indic {
  padding-top: 0;
}

h2 {
  margin: 0;
  font-size: 42px;
  font-weight: 500;
  line-height: 49px;
}

.indic h2 {
  font-weight: 400;
  line-height: 57px;
}

.info p {
  height: 60px;
  margin: 0;
  font-size: 42px;
  line-height: 66px;
}

.distance {
  color: #757575;
  font-size: 36px;
  line-height: 54px;
}

.system-nav {
  display: flex;
  flex: none;
  align-items: center;
  justify-content: center;
  gap: 180px;
  height: 126px;
  background: #ebebeb;
}

.system-nav svg {
  width: 42px;
  height: 42px;
}
```
